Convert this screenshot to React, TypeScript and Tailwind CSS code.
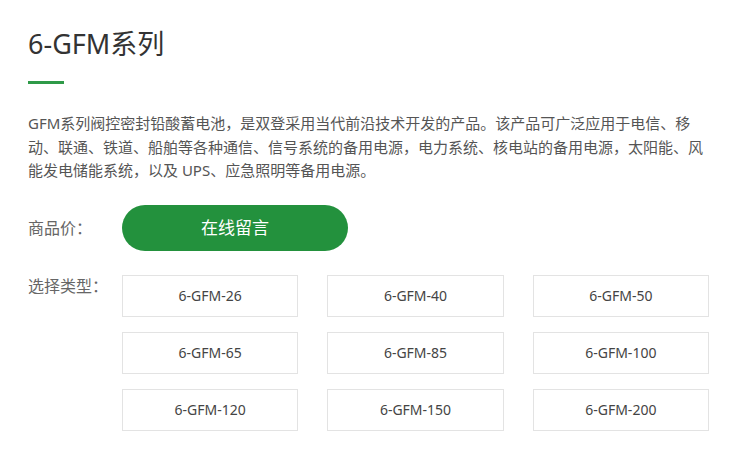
const models = [
  "6-GFM-26",
  "6-GFM-40",
  "6-GFM-50",
  "6-GFM-65",
  "6-GFM-85",
  "6-GFM-100",
  "6-GFM-120",
  "6-GFM-150",
  "6-GFM-200",
];

export default function App() {
  return (
    <div
      className="w-[749px] h-[475px] bg-white px-[28px] pt-[26px] overflow-hidden"
      style={{ fontFamily: '"Noto Sans", "Noto Sans CJK SC", sans-serif' }}
    >
      {/* Title */}
      <h1 className="text-[27px] leading-[36px] text-[#333] font-normal">6-GFM系列</h1>
      <div className="mt-[19px] w-[36px] h-[3px] bg-[#2f9a48]" />

      {/* Description */}
      <p className="mt-[28px] w-[690px] text-[15px] leading-[23.5px] text-[#555]">
        GFM系列阀控密封铅酸蓄电池，是双登采用当代前沿技术开发的产品。该产品可广泛应用于电信、移
        <br />
        动、联通、铁道、船舶等各种通信、信号系统的备用电源，电力系统、核电站的备用电源，太阳能、风
        <br />
        能发电储能系统，以及 UPS、应急照明等备用电源。
      </p>

      {/* Price row */}
      <div className="mt-[22px] flex items-center">
        <span className="w-[94px] text-[16px] text-[#666]">商品价：</span>
        <button className="w-[226px] h-[46px] rounded-full bg-[#23913d] text-white text-[17px]">
          在线留言
        </button>
      </div>

      {/* Type selector */}
      <div className="mt-[24px] flex items-start">
        <span className="w-[94px] text-[16px] leading-[20px] pt-[1px] text-[#666]">选择类型：</span>
        <div className="grid grid-cols-3 w-[587px] gap-x-[29px] gap-y-[15px]">
          {models.map((m) => (
            <div
              key={m}
              className="h-[42px] border border-[#e3e3e3] flex items-center justify-center text-[14px] text-[#444]"
            >
              {m}
            </div>
          ))}
        </div>
      </div>
    </div>
  );
}
